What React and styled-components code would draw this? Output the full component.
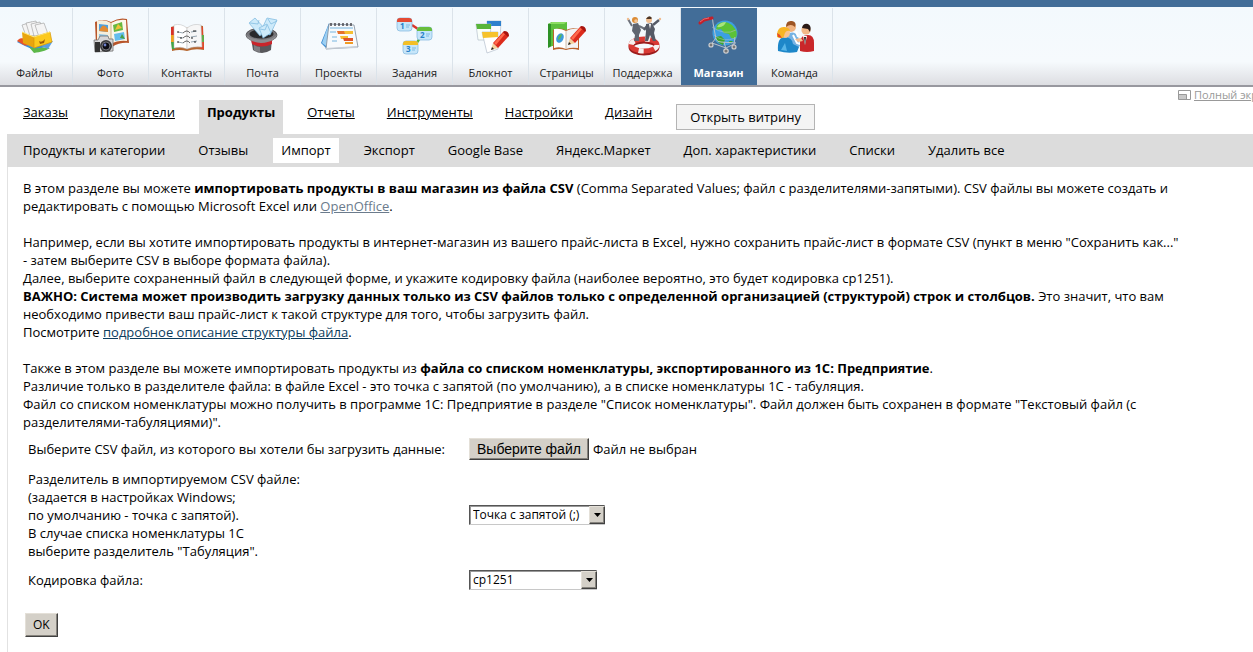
import { useRef, useState } from "react";
import styled, { createGlobalStyle, css } from "styled-components";

const GlobalStyle = createGlobalStyle`
  * {
    box-sizing: border-box;
  }

  body {
    margin: 0;
    background: #fff;
    color: #000;
    font-family: "Open Sans", "Noto Sans", sans-serif;
    font-size: 13px;
    line-height: 18px;
    overflow-x: hidden;
  }

  a {
    color: inherit;
  }
`;

/* ---------- top navigation ---------- */

const TopNav = styled.nav`
  border-top: 7px solid #426d98;
  border-bottom: 2px solid #98989f;
  background: linear-gradient(#f3f9fd 0%, #f6fafd 70%, #dddee2 100%);
  overflow: hidden;
`;

const TopNavList = styled.ul`
  display: flex;
  margin: 0 0 0 -3px;
  padding: 1px 0 0;
  list-style: none;
`;

const TopNavLink = styled.a`
  display: flex;
  flex-direction: column;
  align-items: center;
  width: 76px;
  height: 77px;
  border-right: 1px solid #dbe3ea;
  color: #222;
  font-size: 11px;
  line-height: 16px;
  text-decoration: none;
  white-space: nowrap;

  svg {
    width: 49px;
    height: 50px;
    margin-bottom: 7px;
    flex-shrink: 0;
  }

  ${({ $active }) =>
    $active &&
    css`
      border-right-color: #426d98;
      background: #426d98;
      color: #fff;
      font-weight: 700;
    `}
`;

/* ---------- section tabs ---------- */

const Section = styled.main`
  margin-left: 7px;
`;

const TabsBar = styled.div`
  display: flex;
  justify-content: space-between;
  height: 47px;
  overflow: hidden;
`;

const Tabs = styled.nav`
  display: flex;
  align-items: flex-start;
  gap: 16px;
  padding: 13px 0 0 8px;
  white-space: nowrap;
`;

const Tab = styled.a`
  height: 34px;
  padding: 3px 8px;

  ${({ $active }) =>
    $active &&
    css`
      background: #dcdcdc;
      font-weight: 700;
      text-decoration: none;
    `}
`;

const StorefrontButton = styled.button`
  height: 26px;
  margin-top: 4px;
  padding: 0 13px;
  border: 1px solid #b4b4b4;
  background: #f4f4f4;
  color: #000;
  font: inherit;
`;

const FullScreenLink = styled.a`
  display: flex;
  gap: 3px;
  width: 75px;
  flex-shrink: 0;
  color: #999;
  font-size: 11px;
  line-height: 16px;
  white-space: nowrap;

  svg {
    flex-shrink: 0;
    margin-top: 3px;
  }
`;

const SubTabs = styled.nav`
  display: flex;
  align-items: center;
  gap: 17px;
  height: 33px;
  padding-left: 8px;
  background: #dcdcdc;
  white-space: nowrap;
`;

const SubTab = styled.a`
  padding: 3px 8px 4px;
  background: ${({ $active }) => ($active ? "#fff" : "transparent")};
  text-decoration: none;
`;

/* ---------- content ---------- */

const Content = styled.div`
  padding: 12px 32px 15px 15px;
  border-left: 1px solid #e2e2e2;
`;

const Paragraph = styled.p`
  margin: 0 0 ${({ $last }) => ($last ? "0" : "18px")};
`;

const NoWrap = styled.span`
  white-space: nowrap;
`;

const TextLink = styled.a`
  color: ${({ $visited }) => ($visited ? "#6b7b8c" : "#0b3c5d")};
`;

const Form = styled.form`
  margin-top: 7px;
`;

const Field = styled.div`
  display: grid;
  grid-template-columns: 441px 1fr;
  align-items: center;
  min-height: 20px;
  margin-bottom: 10px;
  padding-left: 5px;
`;

const FilePicker = styled.div`
  display: flex;
  align-items: center;
  gap: 4px;
`;

const bevel = css`
  border: 1px solid;
  border-color: #e4e0d8 #404040 #404040 #e4e0d8;
  background: #d4d0c8;
  box-shadow: inset -1px -1px 0 #86837d;
  color: #000;
`;

const FileButton = styled.button`
  ${bevel};
  height: 22px;
  padding: 0 7px;
  font-family: "Liberation Sans", Arial, sans-serif;
  font-size: 14px;
`;

const SubmitButton = styled.button`
  ${bevel};
  height: 24px;
  margin: 13px 0 0 2px;
  padding: 0 7px;
  font: inherit;
  font-size: 12px;
`;

const SelectBox = styled.div`
  position: relative;
  width: ${({ $width }) => $width};
  height: 20px;
`;

const Select = styled.select`
  appearance: none;
  width: 100%;
  height: 100%;
  padding: 0 18px 0 3px;
  border: 1px solid;
  border-color: #555 #c8c8c8 #c8c8c8 #555;
  border-radius: 0;
  box-shadow: inset 1px 1px 0 #999;
  background: #fff;
  color: #000;
  font: inherit;
  font-size: 12px;
`;

const SelectArrow = styled.span`
  ${bevel};
  position: absolute;
  top: 1px;
  right: 0;
  bottom: 1px;
  display: flex;
  align-items: center;
  justify-content: center;
  width: 16px;
  pointer-events: none;
`;

/* ---------- icons ---------- */

function FilesIcon() {
  return (
    <>
      <path d="M20 42c4-4 8-1 12-4l23 3-3 5-15 4-9-4z" fill="#3a8fdc" />
      <path d="M20 41c3-4 6-2 9-3l2 7c-4 2-6-2-11-4z" fill="#e8542a" />
      <path d="M32 47c7 3 13-1 21 1-5 3-9 4-16 5z" fill="#5cb84a" />
      <path d="M42 45l14-4-5 8z" fill="#5a9fe0" />
      <g fill="#f4f4f4" stroke="#9a9a9a" strokeWidth=".6">
        <path d="M25 25l10-3 4 13-10 1z" />
        <path d="M29 23l10-2 4 14-10 1z" />
        <path d="M34 24l9-2 4 13-10 1z" />
        <path d="M38 25l9-2 4 11-9 3z" />
      </g>
      <path d="M25 32l12 5v11l-11-5z" fill="#e9a50e" />
      <path d="M37 37l16-5 2 10-18 6z" fill="#fcc91c" stroke="#d99706" strokeWidth=".7" />
      <path d="M25 32l12 5 16-5" fill="none" stroke="#ffe66e" />
      <path d="M42 41q3 2 6-2l-1 4-4 1z" fill="#9b5a05" />
    </>
  );
}

function PhotoIcon() {
  return (
    <>
      <path d="M22 22q8-4 16 0 8-5 16-3l2 24q-9-1-17 4-8-3-16-1z" fill="#b8562b" />
      <path d="M24 21q8-2 14 2v21q-7-3-14-1z" fill="#f6efdc" />
      <path d="M38 23q7-4 15-3l1 21q-9-1-16 3z" fill="#fbf7ea" />
      <path d="M26 24l9 1v7l-9-1z" fill="#4c9fe0" />
      <path d="M26 31q4-10 9-2v3z" fill="#e38b32" />
      <path d="M40 25l9-3 1 8-9 2z" fill="#67b83f" />
      <path d="M42 30l3-6 4 4z" fill="#efc13a" />
      <path d="M41 34l10-2 1 7-10 2z" fill="#65bdec" />
      <path d="M47 38l2-4 3 5z" fill="#4aa043" />
      <path d="M26 34l9 1v5l-9-1z" fill="#8cc7ec" />
      <path d="M38 23v21" stroke="#c9a46c" strokeWidth=".8" />
      <path d="M21 40h4l2-4h8l1 3h4v12l-18 1z" fill="#d6d6d8" stroke="#707070" strokeWidth=".8" />
      <path d="M22 42h5v10h-5z" fill="#333" />
      <circle cx="33" cy="46" r="6" fill="#3a3a3c" />
      <circle cx="33" cy="46" r="4" fill="#0d0d14" stroke="#8c8c90" strokeWidth=".8" />
      <circle cx="32" cy="45" r="1.4" fill="#6d7fc9" />
    </>
  );
}

function ContactsIcon() {
  return (
    <>
      <path d="M22 27q8-3 16 1 8-4 16-2l1 24q-9-2-17 1-8-2-15 0z" fill="#b5642c" />
      <path d="M22 27h4v8h-4z" fill="#d93327" />
      <path d="M22 35h4v7h-4z" fill="#f0a11f" />
      <path d="M22 42h4v7h-3z" fill="#42a548" />
      <path d="M51 27h3v8h-3zM51 42h4v7h-4z" fill="#de4a29" />
      <path d="M51 35h4v7h-4z" fill="#5fac46" />
      <path d="M25 25q7-2 13 3v21q-6-3-13-1z" fill="#fff" stroke="#b8b8b8" strokeWidth=".5" />
      <path d="M38 28q6-5 14-3l1 22q-9-1-15 2z" fill="#f6f6f6" stroke="#b8b8b8" strokeWidth=".5" />
      <path
        d="M29 32l5 1M28 37l6 1M29 42l5 1M42 32l6-1M42 37l6-1M42 42l6-1"
        stroke="#8093a0"
        strokeWidth=".8"
      />
      <g fill="none" stroke="#222">
        <path d="M34 33q4-4 7 0M34 38q4-4 7 0M34 43q4-4 7 0" strokeWidth=".7" />
        <path d="M28 32h2M31 38h2M28 42h2M44 31h3M42 38h2M45 42h2" />
      </g>
    </>
  );
}

function MailIcon() {
  return (
    <>
      <ellipse cx="36.5" cy="35" rx="15.5" ry="7" fill="#77777b" stroke="#454548" strokeWidth=".8" />
      <ellipse cx="36.5" cy="34" rx="12" ry="4.5" fill="#29292c" />
      <g fill="#cdeafa" stroke="#7ab8de" strokeWidth=".7">
        <path d="M24 23l6-5 10 11-5 7z" />
        <path d="M42 18l10 2-7 15-9-4z" />
        <path d="M34 28l8-4 4 9-8 5z" />
        <path d="M25 23l8 1 1-4M43 19l3 5 6-3M35 29l5 1 2-5" fill="none" />
      </g>
      <path d="M26 38q11 7 21 0l-1 12q-9 6-18 0z" fill="#58585c" />
      <path d="M26 39q11 6 21 0v5q-10 5-20 0z" fill="#c9252b" />
      <path d="M21 34q1 8 15 9 15-1 16-9-2 5-15 6-13-1-16-6z" fill="#8d8d91" />
      <path d="M29 45q3 2 6 2v5q-4 0-6-2z" fill="#909094" opacity=".7" />
    </>
  );
}

function ProjectsIcon() {
  return (
    <>
      <path d="M28 23l-8 20 5 5 8-6z" fill="#3f8ed2" />
      <path d="M27 26l-6 17 4 3 5-5z" fill="#9cd0f4" />
      <path d="M28 24l25 1 4 22-32 2z" fill="#f7fafc" stroke="#7f8c99" strokeWidth=".8" />
      <path d="M25 48l31-2 1 2-32 1z" fill="#c9d0d8" />
      <path d="M29 28h23M29 32h6M31 37h5M31 41h5" stroke="#76b5df" />
      <path d="M36 31h12v3H37z" fill="#e5702d" />
      <path d="M43 31h9v3h-8z" fill="#f6bf32" />
      <path d="M39 36h8v3h-7z" fill="#f6bf32" />
      <path d="M42 38h10v3H43z" fill="#e0542a" />
      <path d="M44 42h8v2h-8z" fill="#f09b24" />
      <path
        d="M30 26v-3M34 26v-3M38 26v-3M42 26v-3M46 26v-3M50 26v-3"
        stroke="#4a4a50"
        strokeWidth="1.5"
      />
    </>
  );
}

function TaskCard({ x, y, color, number }) {
  return (
    <g transform={`translate(${x} ${y})`}>
      <rect width="15" height="13" rx="3" fill="#c6e6fa" stroke="#80b6de" strokeWidth=".7" />
      <path d="M0 4V3q0-3 3-3h9q3 0 3 3v1z" fill={color} />
      <text x="3" y="11" fill="#2680c8" fontSize="8" fontWeight="700">
        {number}
      </text>
      <path d="M9 7h4M9 9h3" stroke="#6baedd" strokeWidth=".8" />
    </g>
  );
}

function TasksIcon() {
  return (
    <>
      <path d="M35 25l6 4" stroke="#d8362a" strokeWidth="2.4" />
      <path d="M43 38l-4 6" stroke="#5eb632" strokeWidth="2.4" />
      <TaskCard x={20} y={18} color="#e44a33" number="1" />
      <TaskCard x={40} y={27} color="#67bd3c" number="2" />
      <TaskCard x={26} y={41} color="#f3bf28" number="3" />
    </>
  );
}

function Pencil() {
  return (
    <>
      <path d="M0 0l2-7 5 5z" fill="#f3d09b" />
      <path d="M0 0l1-3 2 2z" fill="#222" />
      <path d="M2-7L12-18q5 0 5 5L7-2z" fill="#dc2b1c" />
      <path d="M3-7l9-10 2 1L5-5z" fill="#ff6a4c" />
      <path d="M12-18l5 5 1-1q0-5-5-5z" fill="#a8140e" />
    </>
  );
}

function NotepadIcon() {
  return (
    <>
      <path d="M34 21h14l-1 20-12 2z" fill="#fafcff" stroke="#aab6c4" strokeWidth=".6" />
      <path d="M34 21h14v5H34z" fill="#2e80cd" />
      <path d="M23 24h15l-1 16H25z" fill="#fafffa" stroke="#aab6c4" strokeWidth=".6" />
      <path d="M23 24h15v5H24z" fill="#58b53a" />
      <path d="M29 32h16v17l-11 4z" fill="#fff" stroke="#aab6c4" strokeWidth=".6" />
      <path d="M29 32h16v5l-15 1z" fill="#f6c22c" />
      <g transform="translate(38 50)">
        <Pencil />
      </g>
    </>
  );
}

function PagesIcon() {
  return (
    <>
      <path d="M19 24l4-2v24l-4 2z" fill="#2d9126" />
      <path d="M22 22h16v24H22z" fill="#5cbf3c" />
      <path d="M19 24l4-2h15l-3 2z" fill="#8bdd62" />
      <path d="M24 30q6-3 13 0 6-3 13-1v21q-7-2-13 0-6-2-13 0z" fill="#b9622c" />
      <path d="M25 29q6-1 12 2v18q-6-3-12-1z" fill="#fff" />
      <path d="M37 31q6-3 12-2v19q-7-1-12 1z" fill="#f3f3f3" />
      <path d="M37 31v18" stroke="#c5ad95" strokeWidth=".8" />
      <ellipse cx="31" cy="38" rx="3.5" ry="5" transform="rotate(25 31 38)" fill="#3d9bdb" />
      <path d="M29 40q0-5 4-6-1 5-4 6z" fill="#5cba4f" />
      <g transform="translate(39 45)">
        <Pencil />
      </g>
    </>
  );
}

function SupportIcon() {
  return (
    <>
      <ellipse cx="39" cy="47" rx="13" ry="6" fill="none" stroke="#9d1d1d" strokeWidth="5" />
      <ellipse cx="39" cy="45" rx="13" ry="6" fill="none" stroke="#d93a34" strokeWidth="5" />
      <ellipse
        cx="39"
        cy="45"
        rx="13"
        ry="6"
        fill="none"
        stroke="#f5f0ee"
        strokeWidth="5"
        strokeDasharray="5 10.6"
      />
      <path d="M28 24l5-1 3 7-2 5v6h-5l1-6-3-4z" fill="#5f6570" />
      <path d="M27 26l-4-7M34 26l6 3" stroke="#6d727c" strokeWidth="2" />
      <circle cx="30" cy="20" r="3" fill="#dc8c35" />
      <circle cx="31" cy="21" r="1.8" fill="#f4c79a" />
      <circle cx="23" cy="19" r="1.2" fill="#f0bd90" />
      <path d="M41 24l6-1 3 6-1 4 2 8h-3l-3-6-2 6h-3l1-10z" fill="#555a66" />
      <path d="M48 25l6-5M42 26l-3 4" stroke="#555a66" strokeWidth="2.4" />
      <path d="M44 24l1 5 1-5z" fill="#fff" />
      <circle cx="44" cy="20" r="3" fill="#efbd90" />
      <path d="M41 19q3-5 6-1l-1 1z" fill="#4c3524" />
      <circle cx="55" cy="19" r="1.2" fill="#f0bd90" />
    </>
  );
}

function ShopIcon() {
  return (
    <>
      <circle cx="44" cy="33" r="12.5" fill="#3c9fe2" />
      <path d="M36 25q7-6 15 0l4 5q2 5-1 9l-4-1-2-4-5-1-3-4-5 1z" fill="#5cc236" />
      <path d="M34 37l6-1 4 4-2 5q-6-2-8-8zM48 41l4 0-3 3z" fill="#3fa52b" />
      <path d="M36 27q3-5 9-5-2 6-9 5z" fill="#c9f29c" opacity=".7" />
      <g fill="none" stroke="#b9c3cc" strokeWidth="1">
        <path d="M27 18q5-2 5 5l3 16q1 3 5 3l15 1" />
        <path d="M31 27q13 9 24 3M33 35q10 8 21 3" opacity=".5" />
        <path d="M35 38l-4 5M43 42l2 7M54 37l-1 8M31 43l14 5 8-4" />
      </g>
      <path d="M19 23l4-3 8-2" fill="none" stroke="#c3202a" strokeWidth="3" strokeLinecap="round" />
      <path d="M19 22l4-3 5-1" fill="none" stroke="#f2777a" strokeWidth=".8" />
      <g fill="#777" stroke="#d0d0d0" strokeWidth="1.2">
        <circle cx="30" cy="45" r="2" />
        <circle cx="45" cy="51" r="2.2" />
        <circle cx="53" cy="47" r="2" />
      </g>
    </>
  );
}

function TeamIcon() {
  return (
    <>
      <path d="M30 34q7-4 11 2l2 10-4 3-9-4z" fill="#76b3e4" />
      <circle cx="34" cy="27" r="5" fill="#f0b483" />
      <path d="M29 27q0-7 6-6 5 1 3 6-4-4-9 0z" fill="#9c5424" />
      <path d="M21 51q-1-13 6-14 8 0 9 7l6 3-2 5q-9 2-19-1z" fill="#1d87c9" />
      <path d="M24 50l4-7 2 8z" fill="#57b5e8" />
      <circle cx="28" cy="33" r="5" fill="#f7c391" />
      <path d="M20 34q1-8 8-7 5 1 5 4-5-1-6 5-1 4-7 1z" fill="#f7b525" />
      <path d="M20 33q3 1 5 5l-4-1z" fill="#e5472a" />
      <path d="M36 35l4 8 3 1M39 31l2 6" stroke="#fff" strokeWidth="2" fill="none" />
      <path d="M43 51V41q1-6 8-6 6 0 6 8v8q-7 2-14 0z" fill="#c9272a" />
      <path d="M46 36l2 9 2-9z" fill="#fff" />
      <path d="M47 37l1 8 1-8z" fill="#222" />
      <circle cx="49" cy="30" r="4.6" fill="#f2b888" />
      <path d="M45 28q1-5 6-4 4 2 2 8l-2-3z" fill="#2b1a16" />
      <path d="M38 39l6-1 2 3-5 1z" fill="#f4bd90" />
    </>
  );
}

const FullScreenIcon = () => (
  <svg width="13" height="10" viewBox="0 0 13 10" aria-hidden="true">
    <path d="M.5.5h12v9H.5z" fill="#fff" stroke="#999" />
    <path d="M1 4h7v5H1z" fill="#c8c8c8" />
    <path d="M1 4.500h7.500V9" fill="none" stroke="#999" />
  </svg>
);

const topNavItems = [
  { label: "Файлы", Icon: FilesIcon },
  { label: "Фото", Icon: PhotoIcon },
  { label: "Контакты", Icon: ContactsIcon },
  { label: "Почта", Icon: MailIcon },
  { label: "Проекты", Icon: ProjectsIcon },
  { label: "Задания", Icon: TasksIcon },
  { label: "Блокнот", Icon: NotepadIcon },
  { label: "Страницы", Icon: PagesIcon },
  { label: "Поддержка", Icon: SupportIcon },
  { label: "Магазин", Icon: ShopIcon },
  { label: "Команда", Icon: TeamIcon },
];

const tabs = [
  "Заказы",
  "Покупатели",
  "Продукты",
  "Отчеты",
  "Инструменты",
  "Настройки",
  "Дизайн",
];

const subTabs = [
  "Продукты и категории",
  "Отзывы",
  "Импорт",
  "Экспорт",
  "Google Base",
  "Яндекс.Маркет",
  "Доп. характеристики",
  "Списки",
  "Удалить все",
];

function SelectField({ id, width, options }) {
  return (
    <SelectBox $width={width}>
      <Select id={id}>
        {options.map((option) => (
          <option key={option}>{option}</option>
        ))}
      </Select>
      <SelectArrow>
        <svg width="7" height="4" viewBox="0 0 7 4" aria-hidden="true">
          <path d="M0 0h7L3.500 4z" />
        </svg>
      </SelectArrow>
    </SelectBox>
  );
}

function ImportForm() {
  const fileInput = useRef(null);
  const [fileName, setFileName] = useState("");

  return (
    <Form onSubmit={(e) => e.preventDefault()}>
      <Field>
        <label htmlFor="csv-file">
          Выберите CSV файл, из которого вы хотели бы загрузить данные:
        </label>
        <FilePicker>
          <input
            ref={fileInput}
            type="file"
            hidden
            onChange={(e) => setFileName(e.target.files[0]?.name ?? "")}
          />
          <FileButton id="csv-file" type="button" onClick={() => fileInput.current.click()}>
            Выберите файл
          </FileButton>
          <span>{fileName || "Файл не выбран"}</span>
        </FilePicker>
      </Field>

      <Field>
        <label htmlFor="separator">
          Разделитель в импортируемом CSV файле:
          <br />
          (задается в настройках Windows;
          <br />
          по умолчанию - точка с запятой).
          <br />
          В случае списка номенклатуры 1С
          <br />
          выберите разделитель "Табуляция".
        </label>
        <SelectField
          id="separator"
          width="136px"
          options={["Точка с запятой (;)", "Запятая (,)", "Табуляция"]}
        />
      </Field>

      <Field>
        <label htmlFor="encoding">Кодировка файла:</label>
        <SelectField id="encoding" width="128px" options={["cp1251", "utf-8", "koi8-r"]} />
      </Field>

      <SubmitButton type="submit">OK</SubmitButton>
    </Form>
  );
}

export default function App() {
  return (
    <>
      <GlobalStyle />

      <TopNav>
        <TopNavList>
          {topNavItems.map(({ label, Icon }) => (
            <li key={label}>
              <TopNavLink href="#" $active={label === "Магазин"}>
                <svg viewBox="13 8 49 50" aria-hidden="true">
                  <Icon />
                </svg>
                {label}
              </TopNavLink>
            </li>
          ))}
        </TopNavList>
      </TopNav>

      <Section>
        <TabsBar>
          <Tabs>
            {tabs.map((tab) => (
              <Tab key={tab} href="#" $active={tab === "Продукты"}>
                {tab}
              </Tab>
            ))}
            <StorefrontButton type="button">Открыть витрину</StorefrontButton>
          </Tabs>
          <FullScreenLink href="#">
            <FullScreenIcon />
            Полный экран
          </FullScreenLink>
        </TabsBar>

        <SubTabs>
          {subTabs.map((tab) => (
            <SubTab key={tab} href="#" $active={tab === "Импорт"}>
              {tab}
            </SubTab>
          ))}
        </SubTabs>

        <Content>
          <Paragraph>
            В этом разделе вы можете{" "}
            <b>импортировать продукты в ваш магазин из файла CSV</b> (Comma Separated Values;
            файл с разделителями-запятыми). CSV файлы вы можете создать и редактировать с помощью
            Microsoft Excel или{" "}
            <TextLink href="#" $visited>
              OpenOffice
            </TextLink>
            .
          </Paragraph>

          <Paragraph>
            Например, если вы хотите импортировать продукты в интернет-магазин из вашего
            прайс-листа в Excel, нужно сохранить прайс-лист в формате CSV (пункт в меню "Сохранить
            как..." <NoWrap>- затем</NoWrap> выберите CSV в выборе формата файла).
            <br />
            Далее, выберите сохраненный файл в следующей форме, и укажите кодировку файла
            (наиболее вероятно, это будет кодировка cp1251).
            <br />
            <b>
              ВАЖНО: Система может производить загрузку данных только из CSV файлов только с
              определенной организацией (структурой) строк и столбцов.
            </b>{" "}
            Это значит, что вам необходимо привести ваш прайс-лист к такой структуре для того,
            чтобы загрузить файл.
            <br />
            Посмотрите <TextLink href="#">подробное описание структуры файла</TextLink>.
          </Paragraph>

          <Paragraph $last>
            Также в этом разделе вы можете импортировать продукты из{" "}
            <b>файла со списком номенклатуры, экспортированного из 1С: Предприятие</b>.
            <br />
            Различие только в разделителе файла: в файле Excel - это точка с запятой (по
            умолчанию), а в списке номенклатуры 1С - табуляция.
            <br />
            Файл со списком номенклатуры можно получить в программе 1С: Предприятие в разделе
            "Список номенклатуры". Файл должен быть сохранен в формате "Текстовый файл (с
            разделителями-табуляциями)".
          </Paragraph>

          <ImportForm />
        </Content>
      </Section>
    </>
  );
}
